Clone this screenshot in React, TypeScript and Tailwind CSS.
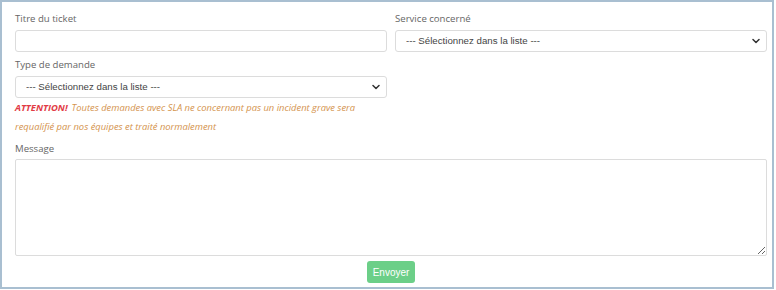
import { useState } from 'react'

const Chevron = () => (
  <svg
    className="pointer-events-none absolute right-[7px] top-1/2 -translate-y-1/2"
    width="8"
    height="6"
    viewBox="0 0 8 6"
    fill="none"
  >
    <path d="M1 1.5l3 3 3-3" stroke="#333" strokeWidth="1.5" strokeLinecap="round" strokeLinejoin="round" />
  </svg>
)

function ListSelect({ value, onChange }: { value: string; onChange: (v: string) => void }) {
  return (
    <div className="relative">
      <select
        value={value}
        onChange={e => onChange(e.target.value)}
        className="block h-[22px] w-full appearance-none rounded-[3px] border border-[#dcdcdc] bg-white pl-[10px] pr-6 font-['Liberation_Sans',Arial,sans-serif] text-[9.7px] text-[#444] outline-none"
      >
        <option value="">--- Sélectionnez dans la liste ---</option>
      </select>
      <Chevron />
    </div>
  )
}

export default function App() {
  const [title, setTitle] = useState('')
  const [service, setService] = useState('')
  const [type, setType] = useState('')
  const [message, setMessage] = useState('')

  const label = "block text-[9.6px] leading-[14px] text-[#666] font-['Open_Sans',sans-serif]"

  return (
    <div className="h-[289px] w-[774px] border-2 border-[#a9bfd1] bg-white font-['Open_Sans',sans-serif]">
      <form
        onSubmit={e => e.preventDefault()}
        className="flex flex-col pl-[13px] pr-[5px] pt-[10px]"
      >
        <div className="grid grid-cols-2 gap-x-[8px]">
          <div>
            <label htmlFor="titre" className={label}>
              Titre du ticket
            </label>
            <input
              id="titre"
              value={title}
              onChange={e => setTitle(e.target.value)}
              className="mt-[4px] block h-[22px] w-full rounded-[3px] border border-[#dcdcdc] bg-white px-2 text-[11px] outline-none"
            />
          </div>
          <div>
            <label className={label}>Service concerné</label>
            <div className="mt-[4px]">
              <ListSelect value={service} onChange={setService} />
            </div>
          </div>
          <div className="mt-[6px]">
            <label className={label}>Type de demande</label>
            <div className="mt-[4px]">
              <ListSelect value={type} onChange={setType} />
            </div>
            <p className="w-[350px] text-[9.4px] italic leading-[19px] text-[#d4934d]">
              <b className="mr-[4px] inline-block font-bold text-[#e23b45]">ATTENTION!</b>
              Toutes demandes avec SLA ne concernant pas un incident grave sera requalifié par nos
              équipes et traité normalement
            </p>
          </div>
        </div>

        <label htmlFor="message" className={`${label} mt-[6px]`}>
          Message
        </label>
        <textarea
          id="message"
          value={message}
          onChange={e => setMessage(e.target.value)}
          className="mt-[3px] block h-[97px] w-full rounded-[2px] border border-[#dcdcdc] bg-white px-2 text-[11px] outline-none"
        />

        <div className="mt-[5px] flex justify-center">
          <button
            type="submit"
            className="h-[22px] w-[48px] rounded-[3px] bg-[#6ccf88] font-['Liberation_Sans',Arial,sans-serif] text-[10px] text-white"
          >
            Envoyer
          </button>
        </div>
      </form>
    </div>
  )
}
